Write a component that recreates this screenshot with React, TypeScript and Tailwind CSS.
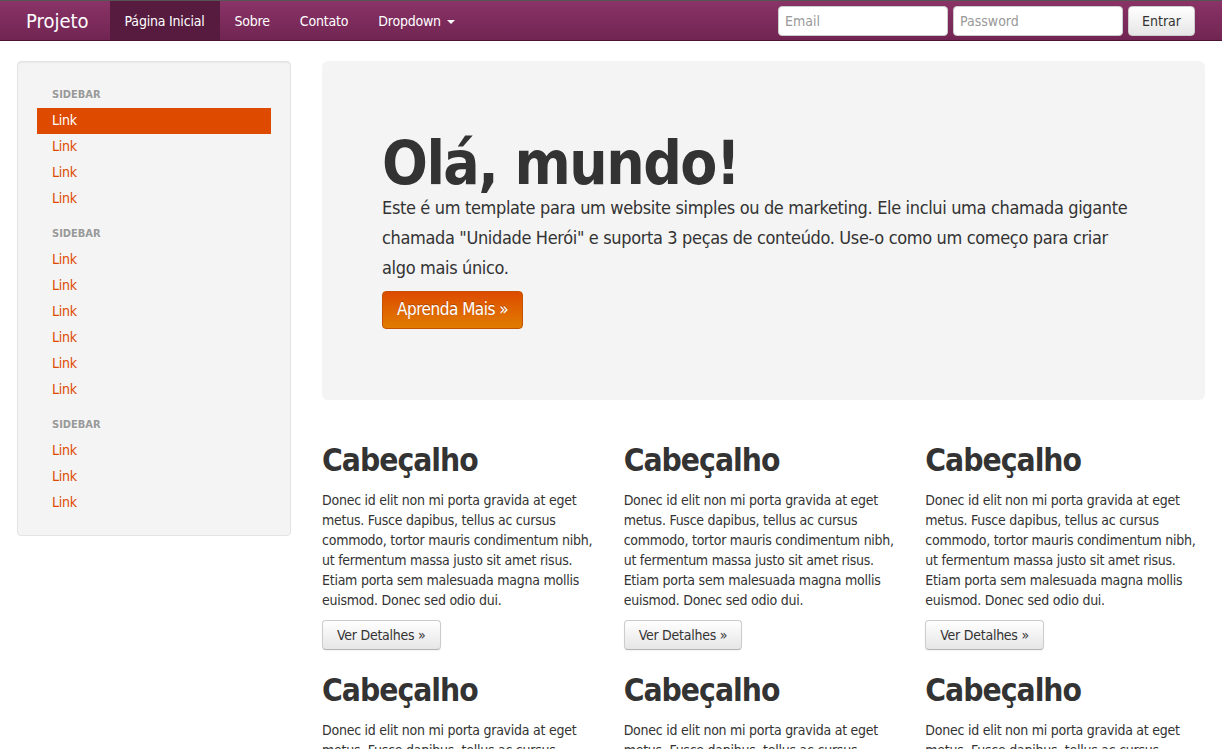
import React from "react";

const font = { fontFamily: '"DejaVu Sans Condensed", "DejaVu Sans", sans-serif' };

function NavHeader({ children }: { children: React.ReactNode }) {
  return (
    <li className="px-[15px] py-[3px] text-[11px] leading-[20px] font-bold uppercase text-[#999] [text-shadow:0_1px_0_rgba(255,255,255,0.5)]">
      {children}
    </li>
  );
}

function NavLink({ active = false }: { active?: boolean }) {
  return (
    <li>
      <a
        href="#"
        className={
          active
            ? "block px-[15px] pt-[2px] pb-[4px] text-[14px] leading-[20px] tracking-[-0.25px] bg-[#dd4a00] text-white"
            : "block px-[15px] pt-[2px] pb-[4px] text-[14px] leading-[20px] tracking-[-0.25px] text-[#dd4a00]"
        }
      >
        Link
      </a>
    </li>
  );
}

function Feature() {
  return (
    <div>
      <h2 className="text-[31.5px] leading-[40px] font-bold tracking-[-1px] text-[#333] my-[10px]">Cabeçalho</h2>
      <p className="text-[14px] leading-[20px] tracking-[-0.25px] text-[#333] mb-[10px]">
        Donec id elit non mi porta gravida at eget metus. Fusce dapibus, tellus ac cursus commodo, tortor mauris
        condimentum nibh, ut fermentum massa justo sit amet risus. Etiam porta sem malesuada magna mollis euismod.
        Donec sed odio dui.
      </p>
      <a
        href="#"
        className="inline-flex items-center h-[30px] px-[14px] text-[14px] tracking-[-0.25px] text-[#333] rounded-[4px] border border-[#ccc] border-b-[#b3b3b3] bg-gradient-to-b from-white to-[#e6e6e6] shadow-[inset_0_1px_0_rgba(255,255,255,0.2),0_1px_2px_rgba(0,0,0,0.05)]"
      >
        Ver Detalhes »
      </a>
    </div>
  );
}

export default function App() {
  return (
    <div className="min-h-screen bg-white text-[#333]" style={font}>
      {/* Navbar */}
      <div className="h-[41px] border-t border-[#555] border-b border-b-[#4a1535] bg-gradient-to-b from-[#8a3366] to-[#712553] flex items-center pl-[26px] pr-[27px]">
        <a href="#" className="text-[20px] text-white mr-[21px] leading-[20px] pt-[1px]">Projeto</a>
        <ul className="flex h-full text-[14px] tracking-[-0.2px] text-white">
          <li className="bg-[#561b3f] px-[15px] pt-[2px] flex items-center">Página Inicial</li>
          <li className="px-[15px] pt-[2px] flex items-center">Sobre</li>
          <li className="px-[15px] pt-[2px] flex items-center">Contato</li>
          <li className="px-[15px] pt-[2px] flex items-center gap-[6px]">
            Dropdown
            <span className="inline-block w-0 h-0 border-l-[4px] border-r-[4px] border-t-[4px] border-l-transparent border-r-transparent border-t-white mt-[1px]" />
          </li>
        </ul>
        <div className="ml-auto flex items-center gap-[5px] mt-[1px]">
          <input
            placeholder="Email"
            className="w-[170px] h-[30px] px-[6px] text-[14px] bg-white rounded-[4px] border border-[#ccc] placeholder:text-[#999] outline-none"
          />
          <input
            placeholder="Password"
            className="w-[170px] h-[30px] px-[6px] text-[14px] bg-white rounded-[4px] border border-[#ccc] placeholder:text-[#999] outline-none"
          />
          <button className="h-[30px] px-[13px] text-[14px] text-[#333] rounded-[4px] border border-[#ccc] bg-gradient-to-b from-white to-[#e6e6e6]">
            Entrar
          </button>
        </div>
      </div>

      {/* Body */}
      <div className="flex px-[17px] pt-[20px] gap-[31px]">
        {/* Sidebar */}
        <div className="w-[274px] shrink-0 self-start bg-[#f4f4f4] border border-[#e3e3e3] rounded-[4px] py-[19px] shadow-[inset_0_1px_1px_rgba(0,0,0,0.05)]">
          <ul className="px-[19px] pt-[1px]">
            <NavHeader>Sidebar</NavHeader>
            <NavLink active />
            <NavLink />
            <NavLink />
            <NavLink />
            <li className="h-[9px]" />
            <NavHeader>Sidebar</NavHeader>
            <NavLink />
            <NavLink />
            <NavLink />
            <NavLink />
            <NavLink />
            <NavLink />
            <li className="h-[9px]" />
            <NavHeader>Sidebar</NavHeader>
            <NavLink />
            <NavLink />
            <NavLink />
          </ul>
        </div>

        {/* Main */}
        <div className="flex-1 min-w-0">
          <div className="bg-[#f4f4f4] rounded-[6px] px-[60px] pt-[72px] pb-[71px] mb-[30px]">
            <h1 className="text-[60px] leading-[60px] font-bold tracking-[-1.5px] text-[#333]">Olá, mundo!</h1>
            <p className="text-[18px] leading-[30px] tracking-[-0.35px] text-[#333] mb-[8px]">
              Este é um template para um website simples ou de marketing. Ele inclui uma chamada gigante chamada
              "Unidade Herói" e suporta 3 peças de conteúdo. Use-o como um começo para criar algo mais único.
            </p>
            <a
              href="#"
              className="inline-flex items-center h-[38px] px-[14px] text-[17px] tracking-[-0.5px] text-white rounded-[4px] border border-[#c45200] bg-gradient-to-b from-[#dd4a00] to-[#e07b00] [text-shadow:0_-1px_0_rgba(0,0,0,0.25)]"
            >
              Aprenda Mais »
            </a>
          </div>

          <div className="grid grid-cols-3 gap-x-[22px] gap-y-[10px]">
            <Feature />
            <Feature />
            <Feature />
            <Feature />
            <Feature />
            <Feature />
          </div>
        </div>
      </div>
    </div>
  );
}
